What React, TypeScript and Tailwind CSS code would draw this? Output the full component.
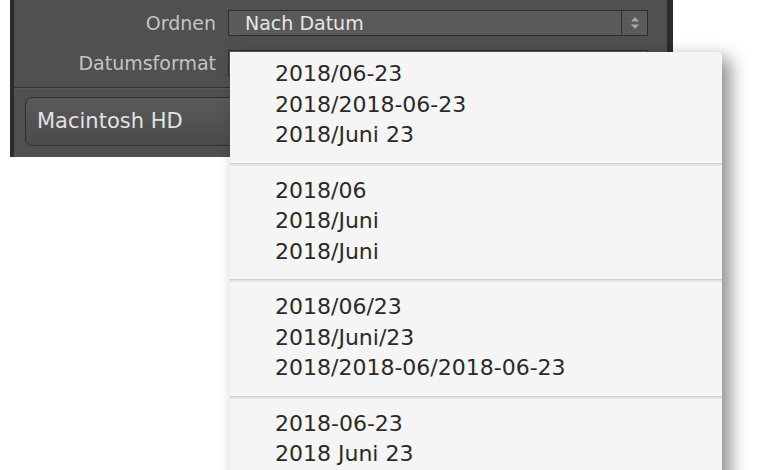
const groups = [
  ["2018/06-23", "2018/2018-06-23", "2018/Juni 23"],
  ["2018/06", "2018/Juni", "2018/Juni"],
  ["2018/06/23", "2018/Juni/23", "2018/2018-06/2018-06-23"],
  ["2018-06-23", "2018 Juni 23"],
];

function Stepper() {
  return (
    <div className="w-[26px] h-full border-l border-[#2f2f2f] flex items-center justify-center">
      <svg width="10" height="14" viewBox="0 0 10 14">
        <path d="M5 1 L9 5.5 L1 5.5 Z" fill="#a9a9a9" />
        <path d="M5 13 L9 8.5 L1 8.5 Z" fill="#a9a9a9" />
      </svg>
    </div>
  );
}

function Row({ label, value }: { label: string; value?: string }) {
  return (
    <div className="flex items-center h-[26px]">
      <div className="w-[202px] text-right text-[19px] text-[#c4c4c4] leading-none">{label}</div>
      <div className="ml-[12px] w-[420px] h-[26px] flex bg-[#5a5a5a] border border-[#2f2f2f]">
        <div className="flex-1 pl-[16px] text-[19px] text-[#e6e6e6] leading-[24px]">{value}</div>
        <Stepper />
      </div>
    </div>
  );
}

export default function App() {
  return (
    <div className="relative w-[780px] h-[470px] bg-white overflow-hidden font-['DejaVu_Sans',sans-serif]">
      <div className="ml-[10px] w-[663px] h-[157px] bg-[#505050] border-l-[4px] border-r-[6px] border-[#2c2c2c] flex flex-col">
        <div className="pt-[10px] flex flex-col gap-[14px]">
          <Row label="Ordnen" value="Nach Datum" />
          <Row label="Datumsformat" />
        </div>
        <div className="mt-[11px] h-[2px] border-t border-[#363636] border-b border-b-[#5c5c5c]" />
        <div className="pl-[11px] pt-[8px]">
          <div className="w-[400px] h-[49px] rounded-[7px] border border-[#2e2e2e] bg-gradient-to-b from-[#5a5a5a] to-[#4b4b4b] flex items-center pl-[11px]">
            <span className="text-[21px] text-[#e2e2e2] leading-none">Macintosh HD</span>
          </div>
        </div>
      </div>

      <div className="absolute left-[230px] top-[52px] w-[492px] h-[440px] bg-[#f5f5f5] rounded-tr-[4px] shadow-[8px_6px_18px_rgba(0,0,0,0.45)] text-[22px] leading-[30.5px] text-[#2a2a2a]">
        {groups.map((g, i) => (
          <div key={i}>
            {i > 0 && <div className="h-[3px] bg-[#e3e3e3] border-t border-[#d2d2d2]" />}
            <div className={i === 0 ? "pt-[7px] pb-[12px] pl-[45px]" : "pt-[10px] pb-[12px] pl-[45px]"}>
              {g.map((t, j) => (
                <div key={j}>{t}</div>
              ))}
            </div>
          </div>
        ))}
      </div>
    </div>
  );
}
